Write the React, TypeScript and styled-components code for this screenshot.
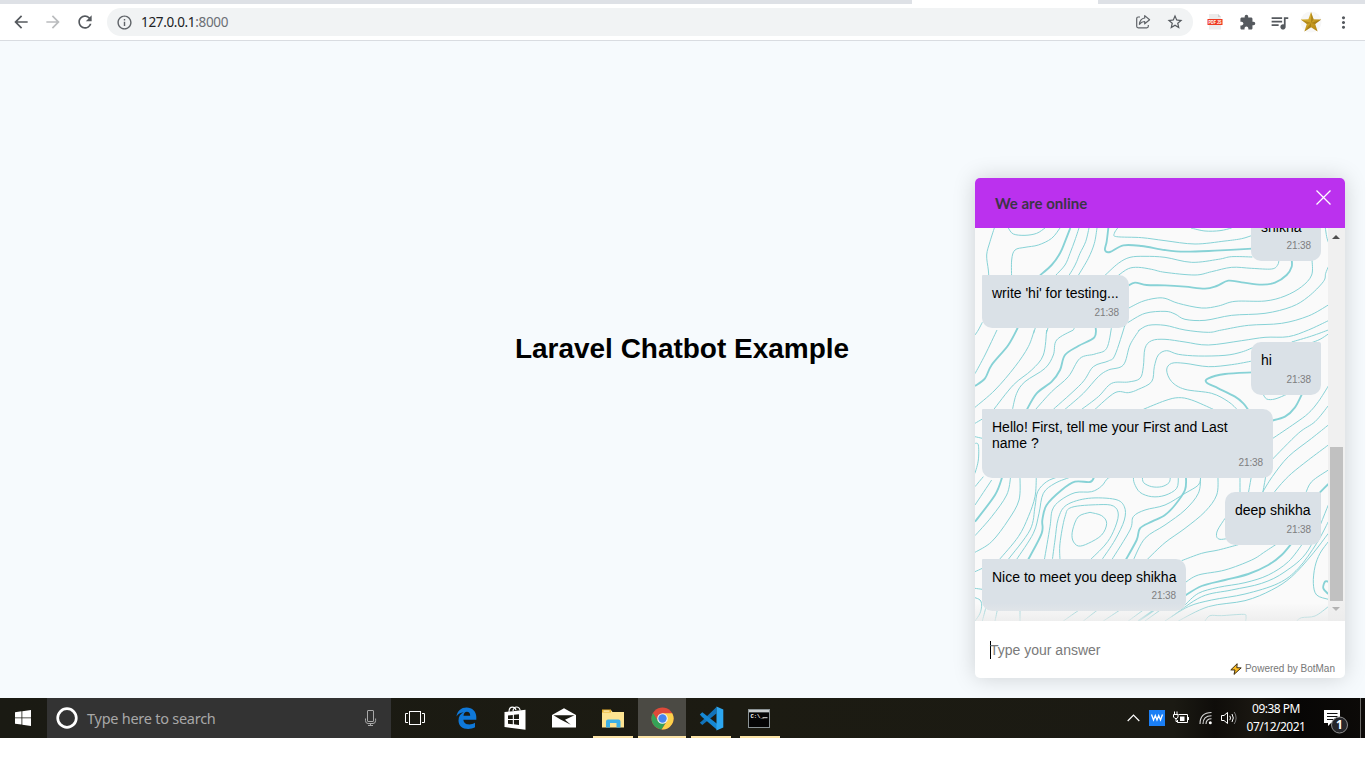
import React from "react";
import styled, { createGlobalStyle } from "styled-components";
import {
  MdArrowBack,
  MdArrowForward,
  MdRefresh,
  MdInfoOutline,
  MdStarBorder,
  MdExtension,
  MdQueueMusic,
  MdMoreVert,
} from "react-icons/md";

const GlobalStyle = createGlobalStyle`
  * { box-sizing: border-box; }
  body { margin: 0; background: #fff; overflow: hidden; font-family: "Liberation Sans", Arial, sans-serif; }
  svg { display: block; flex: none; }
`;

const ui = `"Noto Sans", "Open Sans", sans-serif`;

const Screen = styled.div`
  width: 1365px;
  height: 768px;
  display: flex;
  flex-direction: column;
  position: relative;
  background: #fff;
`;

/* ---------- browser chrome ---------- */

const TabStrip = styled.div`
  height: 4px;
  background: #dee1e6;
  display: flex;
  padding-left: 912px;
`;
const ActiveTab = styled.div`
  width: 186px;
  background: #fff;
`;
const Toolbar = styled.div`
  height: 37px;
  display: flex;
  align-items: center;
  border-bottom: 1px solid #d9dce1;
  padding: 0 5px;
  color: #5f6368;
`;
const ToolCell = styled.div<{ $faded?: boolean }>`
  width: 32px;
  height: 32px;
  display: flex;
  align-items: center;
  justify-content: center;
  color: ${(p) => (p.$faded ? "#babcbe" : "#55595e")};
`;
const Omnibox = styled.div`
  width: 1086px;
  height: 28px;
  margin: 0 6px;
  border-radius: 14px;
  background: #f1f3f4;
  display: flex;
  align-items: center;
  padding: 0 2px 0 9px;
`;
const Url = styled.div`
  flex: 1;
  margin-left: 8px;
  font: 13.5px/20px ${ui};
  letter-spacing: -0.33px;
  color: #202124;
  white-space: nowrap;
  span { color: #6b6f74; }
`;

/* ---------- page ---------- */

const Page = styled.main`
  height: 657px;
  background: #f6fafd;
  display: flex;
  align-items: center;
  justify-content: center;
  overflow: hidden;
`;
const Heading = styled.h1`
  margin: 0;
  padding: 0 1px 41px 0;
  font-size: 28px;
  line-height: 34px;
  letter-spacing: -0.02px;
  color: #000;
  white-space: nowrap;
`;

/* ---------- chat widget ---------- */

const Widget = styled.section`
  position: absolute;
  left: 975px;
  top: 178px;
  width: 370px;
  height: 500px;
  display: flex;
  flex-direction: column;
  border-radius: 5px;
  background: #fff;
  box-shadow: 0 0 22px rgba(0, 0, 0, 0.17);
  overflow: hidden;
`;
const WidgetHeader = styled.header`
  height: 50px;
  background: #bb31ee;
  display: flex;
  justify-content: space-between;
  padding: 0 14.5px 0 20px;
  font: bold 15px/51px Lato, sans-serif;
  color: #3b3447;
  svg { margin-top: 11.5px; }
`;
const ChatArea = styled.div`
  height: 393px;
  display: flex;
  position: relative;
`;
const Thread = styled.div`
  flex: 1;
  height: 393px;
  position: relative;
  overflow: hidden;
  background: #fafafa;
`;
const Backdrop = styled.svg`
  position: absolute;
  inset: 0;
`;
const Messages = styled.div`
  position: relative;
  height: 393px;
  display: flex;
  flex-direction: column;
  justify-content: flex-end;
  gap: 14px;
  padding: 0 7px 10px;
`;
const Bubble = styled.div<{ $mine?: boolean; $w: number; $h?: number }>`
  align-self: ${(p) => (p.$mine ? "flex-end" : "flex-start")};
  width: ${(p) => p.$w}px;
  height: ${(p) => p.$h ?? 53}px;
  flex: none;
  display: flex;
  flex-direction: column;
  justify-content: space-between;
  padding: 10px 10px 9px;
  border-radius: ${(p) => (p.$mine ? "10px 2px 10px 10px" : "1px 10px 10px 10px")};
  background: #dae1e7;
  font-size: 14px;
  line-height: 16px;
  color: #000;
`;
const Body = styled.span`
  margin-right: -1px;
`;
const Time = styled.time`
  align-self: flex-end;
  font-size: 10px;
  line-height: 12px;
  letter-spacing: -0.1px;
  color: #7e7e80;
`;
const Scrollbar = styled.div`
  width: 17px;
  background: #f0f0f0;
  display: flex;
  flex-direction: column;
  align-items: center;
  padding: 7px 1px 10px 0;
`;
const Thumb = styled.div`
  width: 13px;
  height: 154px;
  margin: auto -1px 6px 0;
  background: #c1c1c1;
`;
const Fade = styled.div`
  position: absolute;
  left: 0;
  right: 0;
  bottom: 0;
  height: 18px;
  background: linear-gradient(rgba(235, 235, 235, 0), rgba(235, 235, 235, 0.8));
`;
const Footer = styled.footer`
  flex: 1;
  display: flex;
  flex-direction: column;
  padding: 20px 10px 0 15px;
`;
const Answer = styled.div`
  height: 18px;
  border-left: 1px solid #000;
  font-size: 14px;
  line-height: 18px;
  text-indent: -1px;
  color: #7a7a7a;
`;
const Powered = styled.div`
  display: flex;
  align-items: center;
  align-self: flex-end;
  gap: 3px;
  margin-top: 4px;
  font-size: 10px;
  line-height: 12px;
  color: #777;
`;

/* ---------- taskbar ---------- */

const Taskbar = styled.div`
  height: 40px;
  display: flex;
  background: linear-gradient(90deg, #1a1a13 0, #1c1b12 55%, #1b1a13 86%, #0f0d0a 89%, #1a1711 92%, #070605 95%, #0c0a08 100%);
  color: #fff;
  font-family: ${ui};
`;
const Start = styled.div`
  width: 47px;
  display: flex;
  align-items: center;
  padding-left: 15px;
`;
const SearchBox = styled.div`
  width: 344px;
  background: #333;
  display: flex;
  align-items: center;
  padding: 0 14px 0 9px;
  color: #a8a8a8;
`;
const SearchText = styled.span`
  flex: 1;
  margin-left: 9px;
  font-size: 14.5px;
  line-height: 20px;
  letter-spacing: -0.26px;
`;
const Apps = styled.div`
  display: flex;
  gap: 1px;
  margin-left: 3px;
`;
const TaskCell = styled.div<{ $active?: boolean }>`
  width: 48px;
  height: 40px;
  display: flex;
  align-items: center;
  justify-content: center;
  position: relative;
  background: ${(p) => (p.$active ? "#4b4a44" : "transparent")};
`;
const Running = styled.i<{ $full?: boolean }>`
  position: absolute;
  bottom: 0;
  left: ${(p) => (p.$full ? 0 : 4)}px;
  right: ${(p) => (p.$full ? 0 : 4)}px;
  height: 2px;
  background: #fbe3a5;
`;
const Tray = styled.div`
  margin-left: auto;
  display: flex;
  align-items: center;
`;
const TrayIcon = styled.div<{ $w: number }>`
  width: ${(p) => p.$w}px;
  display: flex;
  justify-content: center;
`;
const Clock = styled.div`
  width: 72px;
  text-align: center;
  font-size: 12px;
  line-height: 18px;
  letter-spacing: -0.5px;
  white-space: nowrap;
`;
const DesktopEdge = styled.div`
  width: 5px;
  height: 40px;
  border-left: 1px solid #6b6a67;
`;

/* ---------- contour lines of the chat background ---------- */

const THIN = `
88,174 75,215 65,255 70,300 72,330
130,174 145,192 180,196 215,190 240,174
140,330 140,270 150,240 180,232 220,225 260,205 285,174
342,174 330,210 315,250 300,285 272,316
372,174 362,215 345,250 335,275 325,295 312,316
396,174 388,220 370,265 340,316
458,174 448,190 455,200 530,203 600,212 690,222 780,213 830,206 862,196
678,174 720,183 765,182 800,174
420,316 460,280 495,262 540,259 600,262 680,277 760,268 800,260 862,261
460,316 490,296 520,292 560,298 600,307 690,315 740,305 800,292 860,295 920,297 938,285 942,268
488,416 530,395 570,385 600,385 640,400 710,414 760,408 810,394 900,393 960,378 1010,350 1040,315 1041,268
488,458 540,430 600,424 630,432 660,448 720,451 800,436 900,430 980,410 1030,380 1075,335 1082,310 1090,290
1081,174 1085,200 1090,217
520,482 550,466 600,466 660,480 730,487 770,480 850,466 950,460 1030,438 1090,405
160,470 150,490
212,470 206,490
250,470 244,490
330,470 325,480
30,495 40,480 52,457
96,480 60,555 30,611
208,480 190,530 150,590 90,660 30,712
245,480 235,555 200,600 145,645 85,720
325,480 275,510 265,555 240,595 180,635 155,670 142,720
440,470 425,535 390,552 345,565 310,620 260,665 212,718
480,465 450,555 430,573 385,590 350,640 265,718
523,480 495,525 475,585 430,600 400,620 355,670 300,718
350,718 400,680 440,640 490,636 525,625 535,590 540,535 560,512 600,508 660,516 730,525 830,512 900,502 970,500 1030,480 1090,452
390,718 450,668 490,668 520,658 560,635 568,590 580,555 605,542 640,553 700,558 780,556 830,546 870,530
535,718 600,692 640,683 680,690 745,718
862,573 800,584 730,590 660,580 620,580 605,600 620,635 660,658 740,670 790,695 818,720
893,670 905,687 930,687 965,673
980,516 1040,498 1090,480
1040,518 1065,508 1090,492
1090,648 1060,695 1030,730 990,760 922,806
1090,707 1050,755 1000,790 920,870
1090,765 1040,805 970,860 922,920 892,968
1090,825 1030,870 980,910 950,940 925,970
1090,900 1040,935 1022,970
30,760 52,747
30,800 52,805
30,820 40,825 40,870 30,910
30,950 55,920
80,930 30,1005
137,920 125,975 80,1040 30,1097
165,920 162,990 130,1050 80,1115 30,1147
214,920 210,980 190,1040 160,1100 102,1170
280,920 245,935 218,965 210,1010 195,1080 130,1168
320,920 270,940 235,970 222,1030 205,1090 155,1168
460,920 430,924 410,948 380,965 330,968 285,992 262,1020 255,1070 238,1170
262,1170 270,1110 280,1045 305,1005 370,985 450,988 478,1010 478,1050 450,1110 410,1170
285,1170 285,1120 300,1040 320,1012 400,1004 445,1008 460,1035 445,1085 420,1125 375,1170
375,1027 410,1037 425,1060 410,1095 370,1120 340,1128 323,1110 323,1080 340,1040 375,1027
505,920 508,940 525,967 560,980 600,976 635,955 640,920
532,920 536,938 560,950 590,950 612,938 616,920
440,1170 495,1080 505,1040 540,1020 600,1005 660,970 700,945 707,920
505,1170 540,1105 600,1065 660,1020 700,970 707,920
545,1170 600,1118 660,1075 720,1025 755,975 759,920
825,920 825,970
859,920 850,970
902,920 893,970
780,1045 758,1080 755,1100 765,1108 785,1106
650,1172 710,1150 760,1140 820,1124
660,1238 700,1215 780,1200 860,1170 900,1145 938,1120
660,1305 700,1270 760,1252 840,1238 910,1215 970,1175 1015,1118
620,1340 710,1280 800,1260 890,1240 960,1205 1030,1140 1090,1005
600,1353 670,1310 740,1290 840,1272 940,1240 1000,1195 1055,1120 1090,1055
640,1353 730,1310 840,1292 920,1260 980,1220 1040,1155 1090,1090
1090,1115 1065,1150 1050,1190 1045,1240 1055,1275 1090,1288
720,1353 735,1337 770,1337 835,1333 843,1340 842,1353
995,1353 1010,1343 1050,1338 1090,1310
30,1205 52,1195
30,1255 52,1258
30,1283 45,1290 50,1305 45,1330 30,1353
52,1353 62,1315
90,1353 98,1315
165,1315 165,1353
295,1353 345,1318
355,1353 400,1318
415,1353 465,1320
490,1353 535,1320
540,1353 600,1310`;

const THICK = `
316,174 300,215 285,250 260,285 225,316
430,174 425,215 420,240 435,246 475,226 530,228 600,240 660,245 750,242 862,236
488,348 510,338 545,345 600,346 660,350 720,356 755,348 790,332 830,337 890,344 930,338 965,315 980,290 980,268
160,470 130,525 80,585 60,625 30,648
392,470 388,502 340,528 300,555 285,600 260,635 215,670 185,720
862,607 780,612 730,625 725,638 760,655 810,680 835,700 850,720
1012,670 990,712 960,740 920,752
112,920 90,975 30,1055
388,920 375,936 330,935 290,960 245,1005 232,1050 230,1090 190,1168
663,920 660,960 630,1005 600,1035 560,1055 525,1075 515,1110 482,1170
1090,942 1062,970
655,1280 710,1248 780,1230 850,1212 910,1185 950,1155 980,1120
1090,1235 1080,1235 1075,1255 1090,1272
520,1353 575,1315`;

type Pt = [number, number];

/* Catmull-Rom spline through the points, written as cubic Béziers. */
function spline(line: string): string {
  const p = line.trim().split(/\s+/).map((s) => s.split(",").map(Number) as Pt);
  let d = `M${p[0][0]} ${p[0][1]}`;
  for (let i = 0; i < p.length - 1; i++) {
    const a = p[Math.max(0, i - 1)];
    const b = p[i];
    const c = p[i + 1];
    const e = p[Math.min(p.length - 1, i + 2)];
    d += `C${b[0] + (c[0] - a[0]) / 6} ${b[1] + (c[1] - a[1]) / 6} ${c[0] - (e[0] - b[0]) / 6} ${c[1] - (e[1] - b[1]) / 6} ${c[0]} ${c[1]}`;
  }
  return d;
}
const toPath = (lines: string) => lines.trim().split("\n").map(spline).join("");

const Contours = () => (
  <Backdrop width="353" height="393" viewBox="30 174 1059 1179" fill="none" stroke="#87d2d6">
    <path d={toPath(THIN)} strokeWidth="3" />
    <path d={toPath(THICK)} strokeWidth="5.6" />
  </Backdrop>
);

/* ---------- icons ---------- */

const ShareIcon = () => (
  <svg width="16" height="16" viewBox="0 0 16 16" fill="none" stroke="#5f6368" strokeWidth="1.2" strokeLinejoin="round">
    <path d="M5 3H3.2Q1.7 3 1.7 4.5v7.8q0 1.5 1.5 1.5h8.600q1.500 0 1.500-1.500V11" />
    <path d="M9.700 1.600 14.600 5.700 9.700 9.800V7.500Q6.500 7.400 4.400 10.300 5 4.600 9.700 4Z" />
  </svg>
);
const PdfIcon = () => (
  <svg width="16" height="16" viewBox="0 0 16 16">
    <path d="M2 0h9l3 3v12.5H2z" fill="#ececec" />
    <path d="M11 0v3h3z" fill="#d2d2d2" />
    <rect x="0.5" y="5" width="15" height="6" fill="#ee3a22" />
    <text x="1.5" y="10" textLength="13" lengthAdjust="spacingAndGlyphs" fontFamily="Liberation Sans" fontWeight="bold" fontSize="5" fill="#fff">PDF JS</text>
  </svg>
);
const GoldStar = () => (
  <svg width="22" height="22" viewBox="0 0 22 22">
    <defs>
      <linearGradient id="gold" x1="0" y1="0" x2="1" y2="1">
        <stop offset="0" stopColor="#e8c23a" />
        <stop offset="1" stopColor="#ad7d10" />
      </linearGradient>
    </defs>
    <circle cx="11" cy="11" r="10.5" fill="#f7f7f7" />
    <path d="M11 1 13.600 8.200 21.200 8.400 15.200 13.100 17.600 20.600 11 16.200 4.400 20.600 6.800 13.100.8 8.400 8.400 8.200Z" fill="url(#gold)" />
    <path d="M11 1v11L13.600 8.200ZM21.200 8.400 11 12l4.200 1.100ZM4.400 20.600 11 12v4.200ZM.8 8.400 11 12l-4.200 1.100Z" fill="#8b650c" opacity=".45" />
  </svg>
);
const CloseIcon = () => (
  <svg width="15" height="15" viewBox="0 0 15 15" stroke="#fff" strokeWidth="1.25">
    <path d="M.5.5 14.5 14.5M14.5.5.5 14.5" />
  </svg>
);
const Bolt = () => (
  <svg width="12" height="12" viewBox="0 0 12 12">
    <path d="M7.200.7.8 6.900 5 7 4 11.400 11.200 4.900 6.800 4.700Z" fill="#fcbc22" stroke="#3a2c14" strokeWidth="1" strokeLinejoin="round" />
  </svg>
);
const WindowsLogo = () => (
  <svg width="16" height="16" viewBox="0 0 16 16" fill="#fff">
    <path d="M0 2.200 6.500 1.300v6.200H0zM7.300 1.200 16 0v7.500H7.300zM0 8.300h6.500v6.300L0 13.700zM7.300 8.300H16V16L7.300 14.700z" />
  </svg>
);
const Cortana = () => (
  <svg width="22" height="22" viewBox="0 0 22 22" fill="none">
    <circle cx="11" cy="11" r="9.300" stroke="#fff" strokeWidth="2.700" />
  </svg>
);
const Mic = () => (
  <svg width="12" height="16" viewBox="0 0 12 16" fill="none" stroke="#a8a8a8">
    <rect x="2.500" y=".5" width="6" height="11" rx=".5" />
    <path d="M.5 8.500v2.200q0 2.800 2.600 2.800h4.900q2.600 0 2.600-2.800V8.500M5.500 13.500v2M3 15.500h5" />
  </svg>
);
const TaskView = () => (
  <svg width="20" height="14" viewBox="0 0 20 14" fill="none" stroke="#fff">
    <rect x="4.500" y=".5" width="11" height="13" />
    <path d="M3 2.500H.5v9H3M17 2.500h2.500v9H17" />
  </svg>
);
const Edge = () => (
  <svg width="21" height="22" viewBox="0 0 21 22">
    <path d="M.5 9.500C1.200 3.800 5 .4 10.600.4c5.600 0 9.700 4 9.700 9.400v3H7.400c.2 3 2.500 4.700 5.800 4.700 2.200 0 4-.6 5.800-1.700v4.500c-2.100 1.200-4.400 1.600-6.800 1.600C6.200 21.900 2.500 18.500 2.500 13.400c0-3.900 2.100-6.800 5.300-8.100C4.600 5.500 2 7.100.5 9.500Zm7-.8h6.700c0-2.500-1.200-3.900-3.300-3.900-1.900 0-3.100 1.500-3.400 3.900Z" fill="#0f78d8" />
  </svg>
);
const Store = () => (
  <svg width="22" height="24" viewBox="0 0 22 24">
    <path d="M5 6Q5 1.200 8.500 1.200 11 1.200 12 4M9 5Q9.500 1 12.500 1T16.200 4.500" fill="none" stroke="#fff" strokeWidth="1.200" />
    <path d="M.5 6 21.500 3.800V23.800L.5 21Z" fill="#fff" />
    <path d="M4 9.400 8.800 8.900V13H4zM9.900 8.800 15 8.200V13H9.900zM4 14h4.800v4.200L4 17.700zM9.900 14H15v5l-5.100-.7z" fill="#1b1a12" />
  </svg>
);
const Mail = () => (
  <svg width="24" height="20" viewBox="0 0 24 20">
    <path d="M0 7 12 .3 24 7V19.500H0Z" fill="#fff" />
    <path d="M1.500 7.300H22.500L13 11.800 18.800 16.800 8.500 11.500Z" fill="#1b1a12" />
  </svg>
);
const Folder = () => (
  <svg width="22" height="19" viewBox="0 0 22 19">
    <path d="M0 1h9l1.500 2H22v15.500H0Z" fill="#fde391" />
    <path d="M0 .5h9v3H0Z" fill="#e6ae2c" />
    <path d="M1.500 1.500h6v1.200h-6Z" fill="#fff3c4" />
    <path d="M4 18.500V12.500q0-2 2-2H16.500q2 0 2 2v6h-4V14H8v4.500Z" fill="#3db0e6" />
  </svg>
);
const Chrome = () => (
  <svg width="23" height="23" viewBox="0 0 23 23">
    <circle cx="11.500" cy="11.500" r="11" fill="#de4a3a" />
    <path d="M11.500 6.200H21.200A11 11 0 0 1 10.500 22.450L16 14Z" fill="#fbd14b" />
    <path d="M2 5.900A11 11 0 0 0 10.500 22.450L15.700 14 7 14Z" fill="#35a257" />
    <circle cx="11.500" cy="11.500" r="5.300" fill="#f5f5f5" />
    <circle cx="11.500" cy="11.500" r="4.200" fill="#4585ee" />
  </svg>
);
const Code = () => (
  <svg width="25" height="25" viewBox="0 0 25 25">
    <path d="M17.500 7.200V1L3.200 14.800.8 16.800 3.300 19 18 7Z" fill="#1273ba" />
    <path d="M.8 8.400 3.300 6.200 18 17.800v6L3 11Z" fill="#1688d4" />
    <path d="M17.500.5 24.300 3.500V21.500L17.500 24.500Z" fill="#2ca6f0" />
  </svg>
);
const Terminal = () => (
  <svg width="24" height="19" viewBox="0 0 24 19">
    <rect width="22" height="19" fill="#8b9395" />
    <rect x="1" y="1" width="20" height="2" fill="#c9cdce" />
    <rect x="1" y="3.500" width="20" height="14.500" fill="#050505" />
    <text x="2.500" y="9" fontFamily="Liberation Mono" fontSize="5.500" fontWeight="bold" fill="#fff">C:\_</text>
    <path d="M14.500 8.700h5" stroke="#ddd" />
  </svg>
);
const Caret = () => (
  <svg width="13" height="8" viewBox="0 0 13 8" fill="none" stroke="#fff" strokeWidth="1.200">
    <path d="M.7 7 6.500 1.200 12.300 7" />
  </svg>
);
const WApp = () => (
  <svg width="16" height="16" viewBox="0 0 16 16">
    <rect width="16" height="16" fill="#1b7ff5" />
    <path d="M2.500 4.500 4.500 10 6.300 5.500 8 10 9.700 5.500 11.500 10 13.500 4.500" fill="none" stroke="#fff" strokeWidth="1.300" />
  </svg>
);
const Battery = () => (
  <svg width="17" height="14" viewBox="0 0 17 14" fill="none" stroke="#fff">
    <path d="M5.500 3.500H14.500V11.500H4.500V9M15.500 6v3" />
    <path d="M7 5.500h4.500v4.500H7z" fill="#fff" stroke="none" />
    <path d="M1.500.5v3M4 .5v3M.5 3.500h4.500v2.500L4 7.500H2L.5 6ZM3 7.500V10.500h2" />
  </svg>
);
const Wifi = () => (
  <svg width="14" height="14" viewBox="0 0 14 14" fill="none" stroke="#d8d8d8" strokeWidth="1.100">
    <path d="M1 13Q1 1.500 12.500 1.500M4 13Q4 4.700 12.500 4.700M7 13Q7 7.700 12.500 7.700" />
    <circle cx="11.300" cy="11.700" r="1.500" fill="#fff" stroke="none" />
  </svg>
);
const Sound = () => (
  <svg width="17" height="14" viewBox="0 0 17 14" fill="none" stroke="#fff">
    <path d="M.5 4.500H3L6.500 1.500v11L3 9.500H.5Z" />
    <path d="M8.800 4.800Q10.200 7 8.800 9.200M11 3Q13.600 7 11 11" />
    <path d="M13.200 1Q17 7 13.200 13" stroke="#777" />
  </svg>
);
const ActionCenter = () => (
  <svg width="26" height="32" viewBox="0 0 26 32">
    <path d="M1 8H17V21H8L5 24V21H1Z" fill="#fff" />
    <path d="M4 11.500H14.500M4 14.500H14.500M4 17.500H10" stroke="#111" />
    <circle cx="16.500" cy="23" r="8" fill="#26262a" stroke="#8d8d8d" />
    <text x="16.500" y="27" textAnchor="middle" fontFamily="Noto Sans" fontWeight="bold" fontSize="12" fill="#fff">1</text>
  </svg>
);

type Msg = { text: string; w: number; h?: number; mine?: boolean };
const MESSAGES: Msg[] = [
  { text: "shikha", w: 70, h: 52, mine: true },
  { text: "write 'hi' for testing...", w: 147 },
  { text: "hi", w: 70, mine: true },
  { text: "Hello! First, tell me your First and Last name ?", w: 291, h: 69 },
  { text: "deep shikha", w: 96, mine: true },
  { text: "Nice to meet you deep shikha", w: 204, h: 52 },
];

export default function App() {
  return (
    <Screen>
      <GlobalStyle />
      <TabStrip>
        <ActiveTab />
      </TabStrip>
      <Toolbar>
        <ToolCell><MdArrowBack size={20} /></ToolCell>
        <ToolCell $faded><MdArrowForward size={20} /></ToolCell>
        <ToolCell><MdRefresh size={20} /></ToolCell>
        <Omnibox>
          <MdInfoOutline size={17} />
          <Url>127.0.0.1<span>:8000</span></Url>
          <ToolCell><ShareIcon /></ToolCell>
          <ToolCell><MdStarBorder size={18} /></ToolCell>
        </Omnibox>
        <ToolCell><PdfIcon /></ToolCell>
        <ToolCell><MdExtension size={17} /></ToolCell>
        <ToolCell><MdQueueMusic size={21} /></ToolCell>
        <ToolCell><GoldStar /></ToolCell>
        <ToolCell><MdMoreVert size={19} /></ToolCell>
      </Toolbar>

      <Page>
        <Heading>Laravel Chatbot Example</Heading>
      </Page>

      <Taskbar>
        <Start><WindowsLogo /></Start>
        <SearchBox>
          <Cortana />
          <SearchText>Type here to search</SearchText>
          <Mic />
        </SearchBox>
        <TaskCell><TaskView /></TaskCell>
        <Apps>
          <TaskCell><Edge /></TaskCell>
          <TaskCell><Store /></TaskCell>
          <TaskCell><Mail /></TaskCell>
          <TaskCell><Folder /><Running /></TaskCell>
          <TaskCell $active><Chrome /><Running $full /></TaskCell>
          <TaskCell><Code /><Running /></TaskCell>
          <TaskCell><Terminal /><Running /></TaskCell>
        </Apps>
        <Tray>
          <TrayIcon $w={24}><Caret /></TrayIcon>
          <TrayIcon $w={24}><WApp /></TrayIcon>
          <TrayIcon $w={25}><Battery /></TrayIcon>
          <TrayIcon $w={24}><Wifi /></TrayIcon>
          <TrayIcon $w={22}><Sound /></TrayIcon>
          <Clock>09:38 PM<br />07/12/2021</Clock>
          <TrayIcon $w={48}><ActionCenter /></TrayIcon>
          <DesktopEdge />
        </Tray>
      </Taskbar>

      <Widget>
        <WidgetHeader>
          We are online
          <CloseIcon />
        </WidgetHeader>
        <ChatArea>
          <Thread>
            <Contours />
            <Messages>
              {MESSAGES.map((m) => (
                <Bubble key={m.text} $w={m.w} $h={m.h} $mine={m.mine}>
                  <Body>{m.text}</Body>
                  <Time>21:38</Time>
                </Bubble>
              ))}
            </Messages>
          </Thread>
          <Scrollbar>
            <svg width="8" height="4" viewBox="0 0 8 4"><path d="M0 4 4 0 8 4Z" fill="#505050" /></svg>
            <Thumb />
            <svg width="8" height="4" viewBox="0 0 8 4"><path d="M0 0 4 4 8 0Z" fill="#a3a3a3" /></svg>
          </Scrollbar>
          <Fade />
        </ChatArea>
        <Footer>
          <Answer>Type your answer</Answer>
          <Powered><Bolt />Powered by BotMan</Powered>
        </Footer>
      </Widget>
    </Screen>
  );
}
